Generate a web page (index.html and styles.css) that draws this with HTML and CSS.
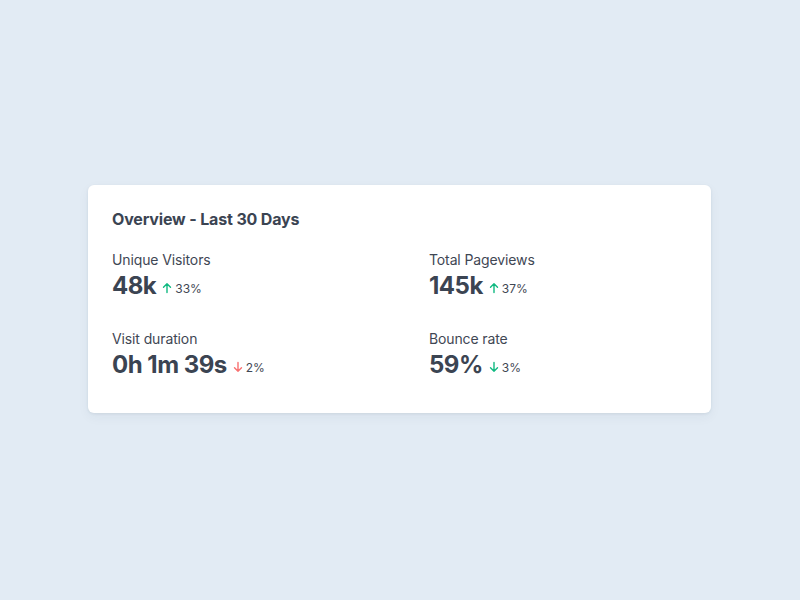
FILE: index.html
```html
<!DOCTYPE html>
<html>
<head>
<meta charset="utf-8">
<link rel="stylesheet" href="styles.css">
</head>
<body>
<div class="page">
  <div class="card">
    <h2 class="title">Overview - Last 30 Days</h2>
    <div class="grid">
      <div class="stat">
        <div class="label">Unique Visitors</div>
        <div class="row"><span class="value">48k</span><span class="delta up"><svg viewBox="0 0 12 12"><path d="M6 10.5V1.8M2.5 5.2L6 1.7l3.5 3.5"/></svg><span class="pct">33%</span></span></div>
      </div>
      <div class="stat">
        <div class="label">Total Pageviews</div>
        <div class="row"><span class="value">145k</span><span class="delta up"><svg viewBox="0 0 12 12"><path d="M6 10.5V1.8M2.5 5.2L6 1.7l3.5 3.5"/></svg><span class="pct">37%</span></span></div>
      </div>
      <div class="stat">
        <div class="label">Visit duration</div>
        <div class="row"><span class="value">0h 1m 39s</span><span class="delta down"><svg viewBox="0 0 12 12"><path d="M6 1.5v8.7M2.5 6.8L6 10.3l3.5-3.5"/></svg><span class="pct">2%</span></span></div>
      </div>
      <div class="stat">
        <div class="label">Bounce rate</div>
        <div class="row"><span class="value">59%</span><span class="delta good"><svg viewBox="0 0 12 12"><path d="M6 1.5v8.7M2.5 6.8L6 10.3l3.5-3.5"/></svg><span class="pct">3%</span></span></div>
      </div>
    </div>
  </div>
</div>
</body>
</html>
```
FILE: styles.css
```css
* { box-sizing: border-box; }
html, body { margin: 0; padding: 0; }
body {
  background: #e2ebf4;
  font-family: Inter, "Noto Sans", sans-serif;
  color: #374151;
}
.page {
  width: 800px;
  height: 600px;
  padding: 185px 89px 0 88px;
}
.card {
  background: #ffffff;
  border-radius: 6px;
  box-shadow: 0 1px 3px rgba(30, 50, 80, 0.08), 0 4px 12px rgba(30, 50, 80, 0.05);
  padding: 24px 24px 32px 24px;
  height: 228px;
}
.title {
  margin: 0;
  font-size: 16px;
  line-height: 20px;
  font-weight: 700;
  color: #3b4452;
  letter-spacing: -0.15px;
}
.grid {
  margin-top: 21px;
  display: grid;
  grid-template-columns: 1fr 1fr;
  column-gap: 59px;
  row-gap: 27px;
}
.label {
  font-size: 14px;
  line-height: 20px;
  color: #3f4754;
  letter-spacing: -0.12px;
}
.row {
  display: flex;
  align-items: baseline;
  height: 32px;
}
.value {
  font-size: 24px;
  line-height: 32px;
  font-weight: 700;
  color: #3b4452;
  letter-spacing: -0.5px;
}
.delta {
  display: inline-flex;
  align-items: center;
  margin-left: 5px;
  font-size: 12px;
  color: #3f4754;
}
.delta svg {
  width: 12px;
  height: 12px;
  margin-right: 2px;
  fill: none;
  stroke-width: 1.4;
  stroke-linecap: round;
  stroke-linejoin: round;
}
.up svg, .good svg { stroke: #10b981; }
.down svg { stroke: #f87171; }
```
